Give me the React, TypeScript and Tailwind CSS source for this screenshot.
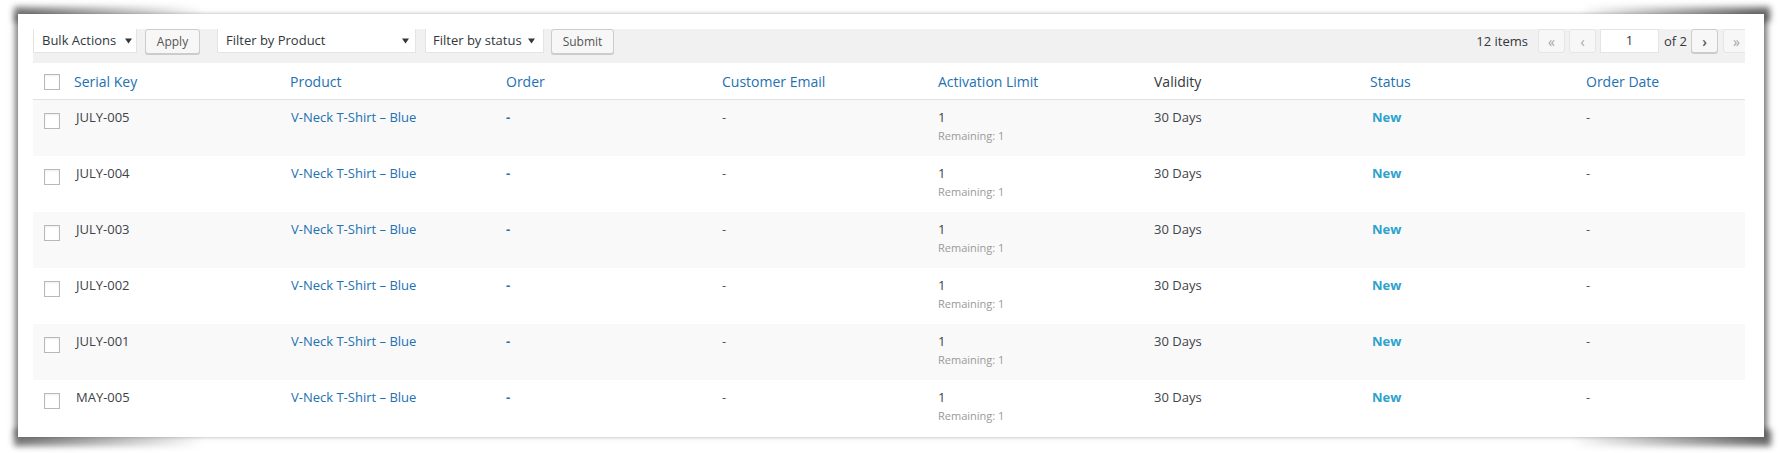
import React from "react";

const rows = ["JULY-005", "JULY-004", "JULY-003", "JULY-002", "JULY-001", "MAY-005"];

function Caret() {
  return (
    <svg width="7" height="6" viewBox="0 0 7 6" className="shrink-0">
      <path d="M0 0.5h7L3.5 5.5z" fill="#32373c" />
    </svg>
  );
}

function Checkbox() {
  return (
    <span className="block w-4 h-4 border border-[#b4b9be] bg-white shadow-[inset_0_1px_2px_rgba(0,0,0,0.07)]" />
  );
}

function Select({ label, cls }: { label: string; cls: string }) {
  return (
    <div
      className={`h-[24px] bg-white border border-[#e4e4e4] border-t-0 flex items-center justify-between whitespace-nowrap text-[13px] text-[#32373c] ${cls}`}
    >
      <span>{label}</span>
      <Caret />
    </div>
  );
}

function Btn({ label, cls }: { label: string; cls: string }) {
  return (
    <div
      className={`h-[25px] bg-[#f7f7f7] border border-[#cccccc] rounded-[3px] shadow-[0_1px_0_#cccccc] flex items-center justify-center whitespace-nowrap text-[12px] text-[#555] ${cls}`}
    >
      {label}
    </div>
  );
}

function PageBtn({ label, active, cls }: { label: string; active?: boolean; cls: string }) {
  return (
    <div
      className={`h-[24px] w-[27px] rounded-[3px] border flex items-center justify-center text-[14px] ${
        active
          ? "bg-[#f7f7f7] border-[#cccccc] text-[#555] shadow-[0_1px_0_#cccccc] font-semibold"
          : "bg-[#f7f7f7] border-[#e5e5e5] text-[#a0a5aa]"
      } ${cls}`}
    >
      {label}
    </div>
  );
}

const headers: { label: string; link: boolean }[] = [
  { label: "Serial Key", link: true },
  { label: "Product", link: true },
  { label: "Order", link: true },
  { label: "Customer Email", link: true },
  { label: "Activation Limit", link: true },
  { label: "Validity", link: false },
  { label: "Status", link: true },
  { label: "Order Date", link: true },
];

export default function App() {
  return (
    <div className="w-[1781px] h-[453px] bg-white overflow-hidden pt-[14px] pl-[18px] [font-family:'Open_Sans',sans-serif]">
      <div className="relative w-[1746px] h-[423px]">
        <div className="absolute left-[-4px] top-[-7px] w-[190px] h-[14px] bg-[linear-gradient(to_right,rgba(0,0,0,0.55),rgba(0,0,0,0))] blur-[3px]" />
        <div className="absolute right-[-6px] top-[-7px] w-[190px] h-[14px] bg-[linear-gradient(to_left,rgba(0,0,0,0.6),rgba(0,0,0,0))] blur-[3px]" />
        <div className="absolute left-[-4px] bottom-[-9px] w-[190px] h-[16px] bg-[linear-gradient(to_right,rgba(0,0,0,0.55),rgba(0,0,0,0))] blur-[3px]" />
        <div className="absolute right-[-7px] bottom-[-9px] w-[200px] h-[16px] bg-[linear-gradient(to_left,rgba(0,0,0,0.6),rgba(0,0,0,0))] blur-[3px]" />
        <div className="relative h-full bg-white shadow-[-6px_0_6px_-3px_rgba(0,0,0,0.5),6px_0_6px_-3px_rgba(0,0,0,0.55)] pt-[15px] pl-[15px]">
          <div className="w-[1712px] h-full overflow-hidden">
            {/* toolbar */}
            <div className="w-[1717px] h-[34px] bg-[#f1f1f1] flex items-start">
              <Select label="Bulk Actions" cls="w-[104px] pl-[8px] pr-[4px]" />
              <Btn label="Apply" cls="ml-[8px] w-[55px]" />
              <Select label="Filter by Product" cls="ml-[17px] w-[199px] pl-[8px] pr-[6px]" />
              <Select label="Filter by status" cls="ml-[9px] w-[119px] pl-[7px] pr-[8px]" />
              <Btn label="Submit" cls="ml-[7px] w-[63px]" />
              <div className="ml-auto flex items-start h-[24px]">
                <span className="h-[24px] leading-[24px] text-[13px] text-[#32373c] mr-[10px] whitespace-nowrap">12 items</span>
                <PageBtn label="«" cls="" />
                <PageBtn label="‹" cls="ml-[4px]" />
                <div className="ml-[4px] w-[59px] h-[24px] bg-white border border-[#e4e4e4] flex items-center justify-center text-[13px] text-[#32373c]">
                  1
                </div>
                <span className="ml-[5px] h-[24px] leading-[24px] text-[13px] text-[#32373c] whitespace-nowrap">of 2</span>
                <PageBtn label="›" active cls="ml-[4px] w-[26px]" />
                <PageBtn label="»" cls="ml-[5px]" />
              </div>
            </div>
            {/* header */}
            <div className="flex h-[37px] items-center border-b border-[#e1e1e1] bg-white w-[1761px]">
              <div className="w-[33px] shrink-0 pl-[11px] mt-[2px]">
                <Checkbox />
              </div>
              {headers.map((h) => (
                <div
                  key={h.label}
                  className={`w-[216px] shrink-0 pl-[8px] text-[14px] ${h.link ? "text-[#2271b1]" : "text-[#32373c]"}`}
                >
                  {h.label}
                </div>
              ))}
            </div>
            {/* rows */}
            {rows.map((key, i) => (
              <div
                key={key}
                className={`flex h-[56px] items-start w-[1761px] text-[13px] text-[#3c434a] ${
                  i % 2 === 0 ? "bg-[#f9f9f9]" : "bg-white"
                }`}
              >
                <div className="w-[33px] shrink-0 pl-[11px] pt-[13px]">
                  <Checkbox />
                </div>
                <div className="w-[216px] shrink-0 pl-[10px] pt-[8px] leading-[18px]">{key}</div>
                <div className="w-[216px] shrink-0 pl-[9px] pt-[8px] leading-[18px] text-[#2271b1]">
                  V-Neck T-Shirt – Blue
                </div>
                <div className="w-[216px] shrink-0 pl-[8px] pt-[8px] leading-[18px] text-[#2271b1] font-bold">-</div>
                <div className="w-[216px] shrink-0 pl-[8px] pt-[8px] leading-[18px] text-[#555]">-</div>
                <div className="w-[216px] shrink-0 pl-[8px] pt-[8px] leading-[18px]">
                  <div>1</div>
                  <div className="mt-[1px] text-[11px] text-[#999]">Remaining: 1</div>
                </div>
                <div className="w-[216px] shrink-0 pl-[8px] pt-[8px] leading-[18px]">30 Days</div>
                <div className="w-[216px] shrink-0 pl-[10px] pt-[8px] leading-[18px] text-[#2ea2cc] font-bold">
                  New
                </div>
                <div className="w-[216px] shrink-0 pl-[8px] pt-[8px] leading-[18px] text-[#555]">-</div>
              </div>
            ))}
          </div>
        </div>
      </div>
    </div>
  );
}
